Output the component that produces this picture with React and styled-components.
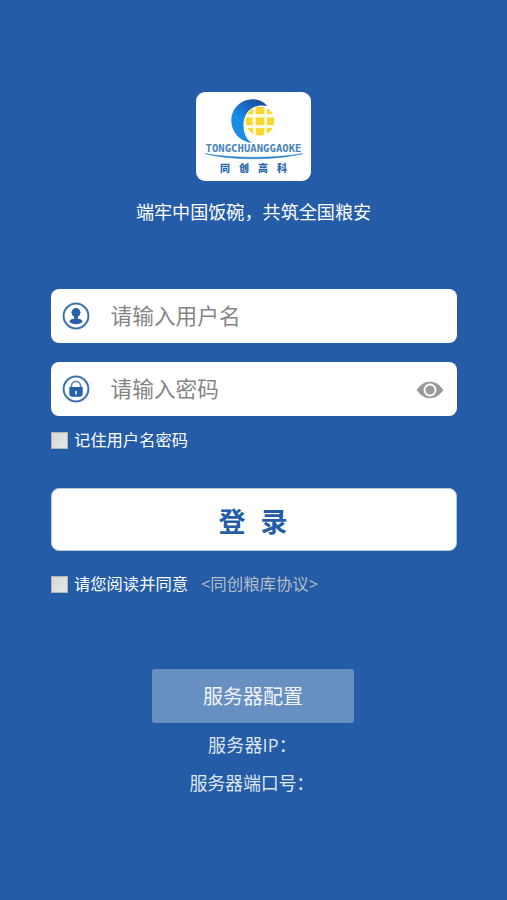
import { useState } from "react";
import styled, { createGlobalStyle } from "styled-components";

const LogoMark = () => (
  <svg width="115" height="89" viewBox="0 0 115 89">
    <defs>
      <linearGradient id="crescent" x1="0.1" y1="1" x2="0.7" y2="0">
        <stop offset="0" stopColor="#2387e0" />
        <stop offset="0.45" stopColor="#1590ea" />
        <stop offset="0.75" stopColor="#1c68c0" />
        <stop offset="1" stopColor="#1b4d9e" />
      </linearGradient>
      <clipPath id="globe">
        <circle cx="64" cy="29" r="14.5" />
      </clipPath>
    </defs>
    <g clipPath="url(#globe)">
      <rect x="49" y="14" width="30" height="31" fill="#fffbe0" />
      <g fill="#f8d830">
        <rect x="50" y="15" width="7" height="7" />
        <rect x="59.8" y="15" width="8.4" height="7" />
        <rect x="71" y="15" width="7" height="7" />
        <rect x="49" y="25.5" width="7.6" height="7.5" />
        <rect x="59.8" y="25.5" width="8.4" height="7.5" />
        <rect x="71" y="25.5" width="7" height="7.5" />
        <rect x="50" y="36" width="7" height="8" />
        <rect x="59.8" y="36" width="8.4" height="8" />
        <rect x="71" y="36" width="7" height="8" />
      </g>
    </g>
    <path
      d="M71 14C66 7 55 5 46 10C36 16 33 27 37 37C40 45 48 50 56 51C50 47 47.5 41 47.5 33C47.5 21 56 11 71 14Z"
      fill="url(#crescent)"
    />
    <text
      x="9.5"
      y="60.3"
      textLength="96"
      lengthAdjust="spacingAndGlyphs"
      fontFamily="DejaVu Sans Mono, monospace"
      fontWeight="700"
      fontSize="10.3"
      fill="#4584be"
    >
      TONGCHUANGGAOKE
    </text>
    <path
      d="M9 61.5C36 66.5 79 66.5 107 61.5C82 68.5 32 68.5 9 61.5Z"
      fill="#2f82c8"
      stroke="#2f82c8"
      strokeWidth="0.5"
    />
    <text
      x="24"
      y="79.5"
      fontFamily="Noto Sans CJK SC, sans-serif"
      fontWeight="900"
      fontSize="10"
      letterSpacing="9"
      fill="#2668ae"
    >
      同创高科
    </text>
  </svg>
);

const UserIcon = () => (
  <svg width="28" height="28" viewBox="0 0 28 28" fill="#2560a8">
    <circle cx="14" cy="14" r="12.4" fill="none" stroke="#3e73b2" strokeWidth="2" />
    <circle cx="14" cy="10.6" r="4.5" />
    <path d="M12.2 13.5h3.6v3.5h-3.6z" />
    <ellipse cx="14" cy="19.3" rx="6.4" ry="2.9" />
  </svg>
);

const LockIcon = () => (
  <svg width="28" height="28" viewBox="0 0 28 28" fill="none">
    <circle cx="14" cy="14" r="12.4" stroke="#3e73b2" strokeWidth="2" />
    <path d="M9.4 12.5V11a4.6 4.6 0 0 1 9.2 0v1.5" stroke="#5c89bf" strokeWidth="1.7" />
    <path d="M7.3 12h13.4v6.5c0 2.2-1.2 3.3-3.2 3.3h-7c-2 0-3.2-1.1-3.2-3.3z" fill="#2560a8" />
    <path d="M14 15.8v3.8" stroke="#c9d9ea" strokeWidth="2" />
  </svg>
);

const EyeIcon = () => (
  <svg width="28" height="18" viewBox="0 0 28 18">
    <path d="M0.5 9C5 3 9 0.8 14 0.8S23 3 27.5 9C23 15 19 17.2 14 17.2S5 15 0.5 9Z" fill="#999" />
    <circle cx="14" cy="9" r="5.5" fill="#999" stroke="#fff" strokeWidth="1.8" />
  </svg>
);

const App = () => {
  const [user, setUser] = useState("");
  const [password, setPassword] = useState("");
  const [visible, setVisible] = useState(false);
  const [remember, setRemember] = useState(false);
  const [agreed, setAgreed] = useState(false);

  return (
    <Page>
      <GlobalStyle />
      <Logo>
        <LogoMark />
      </Logo>
      <Slogan>端牢中国饭碗，共筑全国粮安</Slogan>
      <Form onSubmit={(e) => e.preventDefault()}>
        <Field>
          <UserIcon />
          <Input
            placeholder="请输入用户名"
            value={user}
            onChange={(e) => setUser(e.target.value)}
          />
        </Field>
        <Field>
          <LockIcon />
          <Input
            type={visible ? "text" : "password"}
            placeholder="请输入密码"
            value={password}
            onChange={(e) => setPassword(e.target.value)}
          />
          <EyeButton type="button" onClick={() => setVisible(!visible)}>
            <EyeIcon />
          </EyeButton>
        </Field>
        <CheckRow>
          <Checkbox checked={remember} onChange={() => setRemember(!remember)} />
          记住用户名密码
        </CheckRow>
        <LoginButton type="submit">
          <span>登</span>
          <span>录</span>
        </LoginButton>
        <CheckRow>
          <Checkbox checked={agreed} onChange={() => setAgreed(!agreed)} />
          请您阅读并同意
          <Agreement>&lt;同创粮库协议&gt;</Agreement>
        </CheckRow>
      </Form>
      <ServerButton>服务器配置</ServerButton>
      <ServerInfo $indent={208} $spacing={0.2}>
        服务器IP：
      </ServerInfo>
      <ServerInfo $indent={189.5} $spacing={-0.2}>
        服务器端口号：
      </ServerInfo>
    </Page>
  );
};

export default App;

const GlobalStyle = createGlobalStyle`
  body {
    margin: 0;
    background: #245ca7;
  }
  * {
    box-sizing: border-box;
  }
  button,
  input {
    font-family: inherit;
  }
`;
const Page = styled.div`
  display: flex;
  flex-direction: column;
  align-items: center;
  width: 507px;
  height: 900px;
  padding-top: 92px;
  overflow: hidden;
  background: #245ca7;
  color: #fff;
  font-family: "Open Sans", "Noto Sans CJK SC", sans-serif;
`;
const Logo = styled.div`
  width: 115px;
  height: 89px;
  border-radius: 9px;
  background: #fff;
  overflow: hidden;
`;
const Slogan = styled.p`
  margin: 18px 0 0;
  height: 26px;
  line-height: 26px;
  font-size: 18.1px;
  white-space: nowrap;
`;
const Form = styled.form`
  width: 406px;
  margin-top: 64px;
`;
const Field = styled.div`
  display: flex;
  align-items: center;
  height: 54px;
  margin-bottom: 19px;
  padding: 0 13px 0 11px;
  border-radius: 8px;
  background: #fff;
  > svg {
    flex: none;
  }
`;
const Input = styled.input`
  flex: 1;
  min-width: 0;
  height: 40px;
  margin-left: 21px;
  padding: 0 0 2px;
  border: none;
  outline: none;
  background: transparent;
  color: #333;
  font-size: 21.7px;
  &::placeholder {
    color: #858585;
    opacity: 1;
  }
`;
const EyeButton = styled.button`
  display: flex;
  padding: 2px 0 0;
  border: none;
  background: none;
`;
const CheckRow = styled.label`
  display: flex;
  align-items: center;
  height: 22px;
  margin-top: -7px;
  font-size: 16.3px;
  white-space: nowrap;
`;
const Checkbox = styled.input.attrs({ type: "checkbox" })`
  appearance: none;
  width: 17px;
  height: 17px;
  margin: 3px 6px 0 0.5px;
  border: 1px solid #b5b3b0;
  background: linear-gradient(135deg, #d6d6d6, #e8e8e8);
  &:checked {
    background: #4a87d0;
  }
`;
const LoginButton = styled.button`
  display: flex;
  justify-content: center;
  align-items: center;
  gap: 15px;
  width: 100%;
  height: 63px;
  margin: 38px 0 28px;
  padding: 1px 1px 0 0;
  border: 1px solid #b9c7da;
  border-radius: 8px;
  background: #fff;
  color: #245ca7;
  font-size: 27px;
  font-weight: 700;
`;
const Agreement = styled.span`
  margin-left: 13px;
  color: #b4bdc6;
  font-size: 16.4px;
`;
const ServerButton = styled.button`
  width: 202px;
  height: 54px;
  margin: 75px 1px 9px 0;
  padding: 0 0 2px;
  border: none;
  border-radius: 3px;
  background: #688fc2;
  color: #f0f4f8;
  font-size: 20px;
`;
const ServerInfo = styled.div`
  align-self: flex-start;
  height: 26px;
  margin-bottom: 12px;
  padding-left: ${(p) => p.$indent}px;
  line-height: 26px;
  color: #dce5ef;
  font-size: 18px;
  letter-spacing: ${(p) => p.$spacing}px;
`;
